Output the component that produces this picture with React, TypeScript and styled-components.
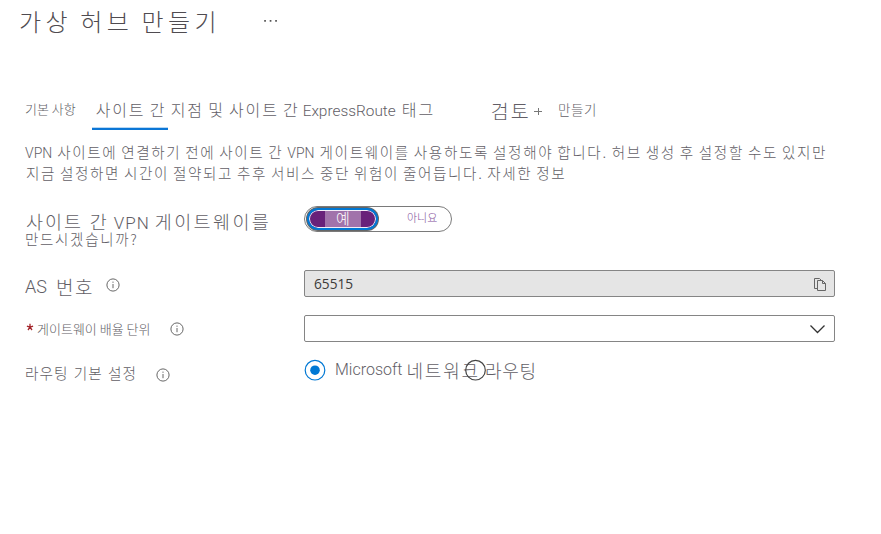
import React from 'react';
import styled, { createGlobalStyle } from 'styled-components';

const GlobalStyle = createGlobalStyle`
  * { box-sizing: border-box; }
  body { margin: 0; background: #fff; font-family: "Noto Sans CJK KR", sans-serif; font-weight: 300; }
`;

const Page = styled.main`
  width: 881px;
  height: 534px;
  overflow: hidden;
  display: flex;
  flex-direction: column;
  color: #625e66;
`;

const Ko = styled.span<{ size: number; track?: number; word?: number; left?: number }>`
  font-size: ${p => p.size}px;
  letter-spacing: ${p => p.track ?? 0}px;
  word-spacing: ${p => p.word ?? 0}px;
  margin-left: ${p => p.left ?? 0}px;
  white-space: pre;
`;

const Latin = styled(Ko)`
  font-family: Roboto, sans-serif;
`;

const Header = styled.header`
  display: flex;
  align-items: center;
  height: 40px;
  padding-left: 19px;
  color: #4f4b50;
`;

const Dots = styled.svg`
  margin-left: 42px;
`;

const Tabs = styled.nav`
  display: flex;
  height: 33px;
  margin-top: 57px;
  padding-left: 25px;
`;

const Tab = styled.div<{ left?: number; top?: number }>`
  display: flex;
  align-items: baseline;
  line-height: 24px;
  height: 24px;
  margin-left: ${p => p.left ?? 0}px;
  margin-top: ${p => p.top ?? 0}px;
`;

const ActiveTab = styled.div`
  width: 345px;
  margin-left: 16px;
`;

const Underline = styled.div`
  width: 76px;
  height: 3px;
  margin-top: 6px;
  background: #0b76d6;
  border-top: 1px solid #b9d8f3;
`;

const Plus = styled.svg`
  margin-left: 3px;
  align-self: center;
`;

const Description = styled.section`
  padding-left: 25px;
  margin-top: 11px;
  height: 43px;
`;

const Line = styled.div<{ h: number }>`
  display: flex;
  align-items: baseline;
  height: ${p => p.h}px;
  line-height: ${p => p.h}px;
`;

const Field = styled.div<{ top: number; h: number }>`
  display: grid;
  grid-template-columns: 279px 531px;
  height: ${p => p.h}px;
  margin-top: ${p => p.top}px;
  padding-left: 25px;
`;

const Label = styled.div<{ top?: number }>`
  display: flex;
  align-items: center;
  height: 27px;
  margin-top: ${p => p.top ?? 0}px;
`;

const LabelStack = styled.div`
  padding-top: 4px;
`;

const Toggle = styled.div`
  display: flex;
  width: 148px;
  height: 26px;
  padding: 1px;
  border: 1px solid #7a7a7a;
  border-radius: 13px;
`;

const ToggleOn = styled.div`
  display: flex;
  justify-content: center;
  width: 71px;
  height: 22px;
  padding: 1px;
  margin-left: 1px;
  border: 2px solid #0078d4;
  border-radius: 11px;
  background: #68217a;
  box-shadow: inset 0 0 0 1px #f4eef8, 0 0 0 1px #666;
`;

const ToggleHighlight = styled.div`
  display: flex;
  justify-content: center;
  width: 36px;
  height: 16px;
  margin-left: 1px;
  background: #a173ab;
  color: #fff;
  line-height: 13px;
`;

const ToggleOff = styled.div`
  display: flex;
  align-items: center;
  height: 17px;
  margin-left: 29px;
  color: #804c98;
`;

const Box = styled.div<{ filled?: boolean }>`
  display: flex;
  align-items: center;
  justify-content: space-between;
  width: 531px;
  height: 27px;
  padding: 0 7px 0 9px;
  border: 1px solid #858585;
  border-radius: 2px;
  background: ${p => (p.filled ? '#e5e5e5' : '#fff')};
`;

const Value = styled.span`
  font: 400 13.7px "Open Sans", sans-serif;
  color: #3c3b3a;
`;

const Radios = styled.div`
  display: flex;
  align-items: center;
  position: relative;
  height: 21px;
`;

const SecondRadio = styled.svg`
  position: absolute;
  left: 160px;
  top: 0;
`;

const InfoIcon = styled.svg<{ left: number; lift?: number }>`
  margin-left: ${p => p.left}px;
  margin-top: ${p => p.lift ?? 0}px;
  flex: none;
`;

const Star = styled.svg`
  margin: -3px 3px 0 1px;
`;

const Info = ({ left, lift }: { left: number; lift?: number }) => (
  <InfoIcon left={left} lift={lift} width="14" height="14" viewBox="0 0 14 14" fill="none" stroke="#666">
    <circle cx="7" cy="7" r="6.1" />
    <path d="M7 6v4.2M7 3.6v1.2" />
  </InfoIcon>
);

export default function App() {
  return (
    <>
      <GlobalStyle />
      <Page>
        <Header>
          <Ko size={24} track={4.4} word={-1.4}>가상 허브 만들기</Ko>
          <Dots width="16" height="4" viewBox="0 0 16 4" fill="#555">
            <path d="M1.2 2h1.7v1.7H1.2zM6.7 2h1.7v1.7H6.7zM12.2 2h1.7v1.7h-1.7z" />
          </Dots>
        </Header>

        <Tabs>
          <Tab><Ko size={13}>기본 사항</Ko></Tab>
          <ActiveTab>
            <Tab left={4}>
              <Ko size={16} track={1.8} word={-0.9}>사이트 간 지점 및 사이트 간</Ko>
              <Latin size={15.4} left={3}>ExpressRoute</Latin>
              <Ko size={16} track={1.9} left={6}>태그</Ko>
            </Tab>
            <Underline />
          </ActiveTab>
          <Tab left={54} top={2}>
            <Ko size={19.5} track={2.2}>검토</Ko>
            <Plus width="8" height="8" viewBox="0 0 8 8" stroke="#777">
              <path d="M0 4.5h8M4.5 1v7" />
            </Plus>
          </Tab>
          <Tab left={16}><Ko size={13.5} track={0.6}>만들기</Ko></Tab>
        </Tabs>

        <Description>
          <Line h={21}>
            <Latin size={14}>VPN</Latin>
            <Ko size={14.6} track={1.6} word={-0.9} left={5}>사이트에 연결하기 전에 사이트 간</Ko>
            <Latin size={14} left={4}>VPN</Latin>
            <Ko size={14.6} track={1.63} word={-0.9} left={5}>게이트웨이를 사용하도록 설정해야 합니다. 허브 생성 후 설정할 수도 있지만</Ko>
          </Line>
          <Line h={21}>
            <Ko size={14.6} track={1.6} word={-0.9} left={1}>지금 설정하면 시간이 절약되고 추후 서비스 중단 위험이 줄어듭니다. 자세한 정보</Ko>
          </Line>
        </Description>

        <Field top={22} h={48}>
          <LabelStack>
            <Line h={22}>
              <Ko size={18.5} track={2} word={0.5} left={1}>사이트 간</Ko>
              <Latin size={17} track={1} left={5}>VPN</Latin>
              <Ko size={18.5} track={2.4} left={5}>게이트웨이를</Ko>
            </Line>
            <Line h={14}><Ko size={14.5} track={1.7}>만드시겠습니까?</Ko></Line>
          </LabelStack>
          <Toggle>
            <ToggleOn><ToggleHighlight><Ko size={15}>예</Ko></ToggleHighlight></ToggleOn>
            <ToggleOff><Ko size={11}>아니요</Ko></ToggleOff>
          </Toggle>
        </Field>

        <Field top={16} h={27}>
          <Label top={3}>
            <Latin size={18}>AS</Latin>
            <Ko size={19} track={1.7} left={9}>번호</Ko>
            <Info left={12} lift={-4} />
          </Label>
          <Box filled>
            <Value>65515</Value>
            <svg width="14" height="16" viewBox="0 0 14 16" fill="none" stroke="#666">
              <path d="M4.5 12.5h-3v-10h5l2 2" />
              <path d="M4.5 4.5h5l3 3v7h-8zM9.5 4.5v3h3" />
            </svg>
          </Box>
        </Field>

        <Field top={18} h={27}>
          <Label>
            <Star width="8" height="8" viewBox="0 0 8 8" stroke="#a4262c" strokeWidth="1.3">
              <path d="M4 .8v3.4M4 4.2L.9 3.2M4 4.2l3.1-1M4 4.2L2 7M4 4.2L6 7" />
            </Star>
            <Ko size={13}>게이트웨이 배율 단위</Ko>
            <Info left={20} lift={1} />
          </Label>
          <Box>
            <span />
            <svg width="18" height="12" viewBox="0 0 18 12" fill="none" stroke="#333" strokeWidth="1.3">
              <path d="M1.5 2.5l7 7 7-7" />
            </svg>
          </Box>
        </Field>

        <Field top={17} h={30}>
          <Label>
            <Ko size={14.7} track={1} word={1}>라우팅 기본 설정</Ko>
            <Info left={19} lift={4} />
          </Label>
          <Radios>
            <svg width="22" height="22" viewBox="0 0 22 22">
              <circle cx="11" cy="11.2" r="9.8" fill="none" stroke="#0078d4" strokeWidth="1.2" />
              <circle cx="11" cy="11.2" r="4.8" fill="#0078d4" />
            </svg>
            <Latin size={16} left={9}>Microsoft</Latin>
            <Ko size={18} track={1.8} left={4}>네트워크</Ko>
            <Ko size={18} track={0.8} left={5}>라우팅</Ko>
            <SecondRadio width="22" height="22" viewBox="0 0 22 22">
              <circle cx="11.5" cy="11.2" r="9.8" fill="none" stroke="#444" strokeWidth="1.2" />
            </SecondRadio>
          </Radios>
        </Field>
      </Page>
    </>
  );
}
